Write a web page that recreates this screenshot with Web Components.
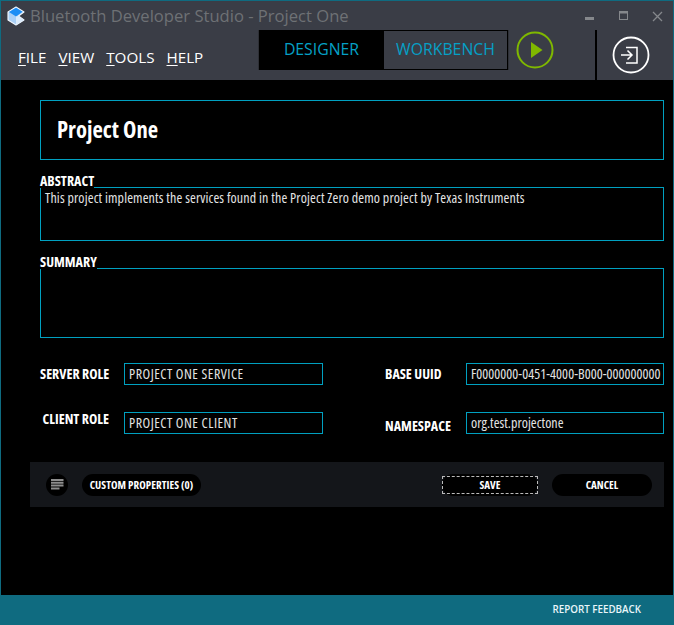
<!DOCTYPE html>
<html><head><meta charset="utf-8"><style>
html,body{margin:0;padding:0;background:#000;}
body{width:674px;height:625px;overflow:hidden;font-family:"Open Sans","Noto Sans",sans-serif;}
</style></head><body>
<bds-app></bds-app>
<script>
function def(name,html,init){customElements.define(name,class extends HTMLElement{constructor(){super();this.attachShadow({mode:'open'}).innerHTML=html;}connectedCallback(){init&&init(this);}});}
const FONT='"Open Sans","Noto Sans",sans-serif';
const COND='font-stretch:75%;';
def('bds-titlebar',`<style>
:host{display:flex;height:30px;align-items:center;box-sizing:border-box;padding:0 0 0 6px;color:#6f7276;}
svg{display:block;flex:none}
.logo{margin-top:-1px}
.t{font:16.600px/1 ${FONT};margin-left:5px;flex:1;color:#6e7175;white-space:nowrap}
.c{display:flex;margin-right:-1px}
.c span{display:flex;width:34px;justify-content:center;align-items:center;height:20px}
.s{margin-left:2px}
</style>
<svg class="logo" width="18" height="20" viewBox="0 0 18 20"><path d="M1 6 9 1l8 5-5.500 4L17 14l-8 5-8-5z" fill="#a9d0f7" stroke="#f2f8ff" stroke-width="1.100" stroke-linejoin="round"/><path d="M2 6 9 1.800 15.500 5.800 9 10.500z" fill="#1c8ef5"/><path d="M9 10.500 11.500 10 17 14 9 19z" fill="#dcecfc"/></svg>
<span class="t">Bluetooth Developer Studio - Project One</span>
<div class="c">
<span><svg class="s" width="10" height="10"><rect y="6" width="9" height="3" fill="#85888c"/></svg></span>
<span><svg class="s" width="10" height="10"><rect x=".5" y=".5" width="8" height="8" fill="none" stroke="#85888c"/><rect width="9" height="2.500" fill="#85888c"/></svg></span>
<span><svg width="11" height="11"><path d="M1 1 10 10M10 1 1 10" stroke="#85888c" stroke-width="1.300"/></svg></span>
</div>`);
def('bds-toolbar',`<style>
:host{display:flex;height:49px;position:relative}
.menu{display:flex;gap:12px;padding:19px 0 0 17px;width:258px;box-sizing:border-box;font:15.200px/1 ${FONT};color:#fff;}
.menu u{text-underline-offset:2px}
</style><div class="menu"><span><u>F</u>ILE</span><span><u>V</u>IEW</span><span><u>T</u>OOLS</span><span><u>H</u>ELP</span></div><slot></slot>`);
def('bds-tabs',`<style>
:host{display:flex;height:40px;width:249px;box-sizing:border-box;border:1px solid #000;background:#000;margin-top:-1px;box-shadow:1px 0 0 #2e3036,-1px 0 0 #2e3036}
span{display:flex;align-items:center;justify-content:center;font:15.800px/1 ${FONT};color:#05a0c6}
.a{width:123px}
.b{flex:1;background:#3a3d46;margin-left:1px;}
</style><span class="a">DESIGNER</span><span class="b">WORKBENCH</span>`);
def('bds-run',`<style>:host{display:block;margin:0 0 0 8px}svg{display:block}</style><svg width="38" height="38" viewBox="0 0 38 38"><circle cx="19" cy="19" r="17.500" fill="none" stroke="#7fb800" stroke-width="2"/><path d="M15 11 26.500 19 15 27z" fill="#7fb800"/></svg>`);
def('bds-exit',`<style>:host{display:flex;width:78px;height:50px;margin:-1px 0 0 41px;border-left:2px solid #000;box-sizing:border-box;padding:6px 0 0 14.500px}svg{display:block}</style><svg width="38" height="38" viewBox="0 0 38 38" fill="none" stroke="#fff" stroke-width="1.500"><circle cx="19" cy="19" r="17.500" stroke-width="1.800"/><path d="M14 11.500h11v15.500H14M9 19h11M15.500 14.500l4.500 4.500-4.500 4.500"/></svg>`);
def('bds-section',`<style>
:host{display:block;position:relative;color:#fff}
.l{font:700 14px/1 ${FONT};${COND}display:flex;align-items:flex-end;height:14px;white-space:nowrap}
.l i{flex:1;height:1px;background:#00a0c0}
.b{border:1px solid #00a0c0;border-top:0;box-sizing:border-box;padding:2px 4px;font:14px/1.150 ${FONT};${COND}letter-spacing:.14px;color:#e4e4e4;}
</style><div class="l"><span id="n"></span><i></i></div><div class="b" id="b"><slot></slot></div>`,el=>{
el.shadowRoot.getElementById('n').textContent=el.getAttribute('label');
el.shadowRoot.getElementById('b').style.height=el.getAttribute('h')+'px';
});
def('bds-field',`<style>
:host{display:flex;align-items:center;color:#fff}
.l{font:700 14px/1 ${FONT};${COND}box-sizing:border-box;white-space:nowrap;position:relative}
.b{border:1px solid #00a0c0;box-sizing:border-box;height:22px;padding:0 4px;display:flex;align-items:center;font:14px/1 ${FONT};${COND}letter-spacing:var(--ls,.05px);color:#e4e4e4;overflow:hidden;white-space:nowrap}
</style><div class="l" id="l"></div><div class="b" id="b"><slot></slot></div>`,el=>{
const s=el.shadowRoot,l=s.getElementById('l'),b=s.getElementById('b');
l.textContent=el.getAttribute('label');
l.style.width=el.getAttribute('lw')+'px';
l.style.textAlign=el.getAttribute('align')||'left';
l.style.top=(el.getAttribute('ly')||0)+'px';
if(el.getAttribute('align')==='right')l.style.paddingRight='15px';
b.style.width=el.getAttribute('w')+'px';
});
def('bds-pill',`<style>
:host{display:flex;align-items:center;justify-content:center;background:#000;border-radius:11px;height:22px;box-sizing:border-box;padding-bottom:1px;color:#fff;font:700 11px/1 ${FONT};${COND}letter-spacing:.05px;white-space:nowrap;position:relative}
:host([focus])::after{content:"";position:absolute;inset:2px 0;border:1px dashed #bbb}
</style><slot></slot>`);
def('bds-footerbar',`<style>:host{display:flex;align-items:center;height:45px;background:#14161a;margin-left:-10px;padding:0 12px 0 16px;box-sizing:border-box;flex:none}
.i{width:22px;height:22px;border-radius:50%;background:#000;display:flex;align-items:center;justify-content:center;flex:none;margin-right:14px}
</style><div class="i"><svg width="13" height="11"><path d="M0 1h12.500M0 3.800h12.500M0 6.600h12.500M0 9.400h8.500" stroke="#8d8d8d" stroke-width="2"/></svg></div><slot></slot>`);
def('bds-app',`<style>
:host{display:flex;flex-direction:column;width:674px;height:625px;box-sizing:border-box;background:#000;border-top:1px solid #0f6b80;border-left:1px solid #0f6b80;border-right:1px solid #0f6b80;}
header{background:#3a3d46;height:79px;flex:none}
main{flex:1;padding:20px 9px 0 39px;display:flex;flex-direction:column}
.title{height:60px;border:1px solid #00a0c0;box-sizing:border-box;display:flex;align-items:center;padding:0 0 0 16px;font:700 22.600px/1 ${FONT};${COND}color:#fff;margin-bottom:14px}
.row{display:flex;justify-content:space-between}
.bot{height:30px;background:#0f6b80;flex:none;display:flex;align-items:center;justify-content:flex-end;padding-right:32px;color:#eaf6fa;font:600 9.800px/1 ${FONT};}
.sp{flex:1}
</style>
<header><bds-titlebar></bds-titlebar><bds-toolbar><bds-tabs></bds-tabs><bds-run></bds-run><bds-exit></bds-exit></bds-toolbar></header>
<main><div class="title">Project One</div>
<bds-section label="ABSTRACT" h="53">This project implements the services found in the Project Zero demo project by Texas Instruments</bds-section>
<div style="height:14px"></div>
<bds-section label="SUMMARY" h="69"></bds-section>
<div style="height:25px"></div>
<div class="row"><bds-field label="SERVER ROLE" lw="84" w="199" style="--ls:.5px">PROJECT ONE SERVICE</bds-field><bds-field label="BASE UUID" lw="81" w="198">F0000000-0451-4000-B000-000000000</bds-field></div>
<div style="height:27px"></div>
<div class="row"><bds-field label="CLIENT ROLE" lw="84" align="right" w="199" ly="-4" style="--ls:.5px">PROJECT ONE CLIENT</bds-field><bds-field label="NAMESPACE" lw="81" w="198" ly="3">org.test.projectone</bds-field></div>
<div style="height:28px"></div>
<bds-footerbar><bds-pill style="width:119px">CUSTOM PROPERTIES (0)</bds-pill><span class="sp"></span><bds-pill focus style="width:96px">SAVE</bds-pill><bds-pill style="width:100px;margin-left:14px">CANCEL</bds-pill></bds-footerbar>
</main>
<div class="bot">REPORT FEEDBACK</div>`);
</script>
</body></html>
